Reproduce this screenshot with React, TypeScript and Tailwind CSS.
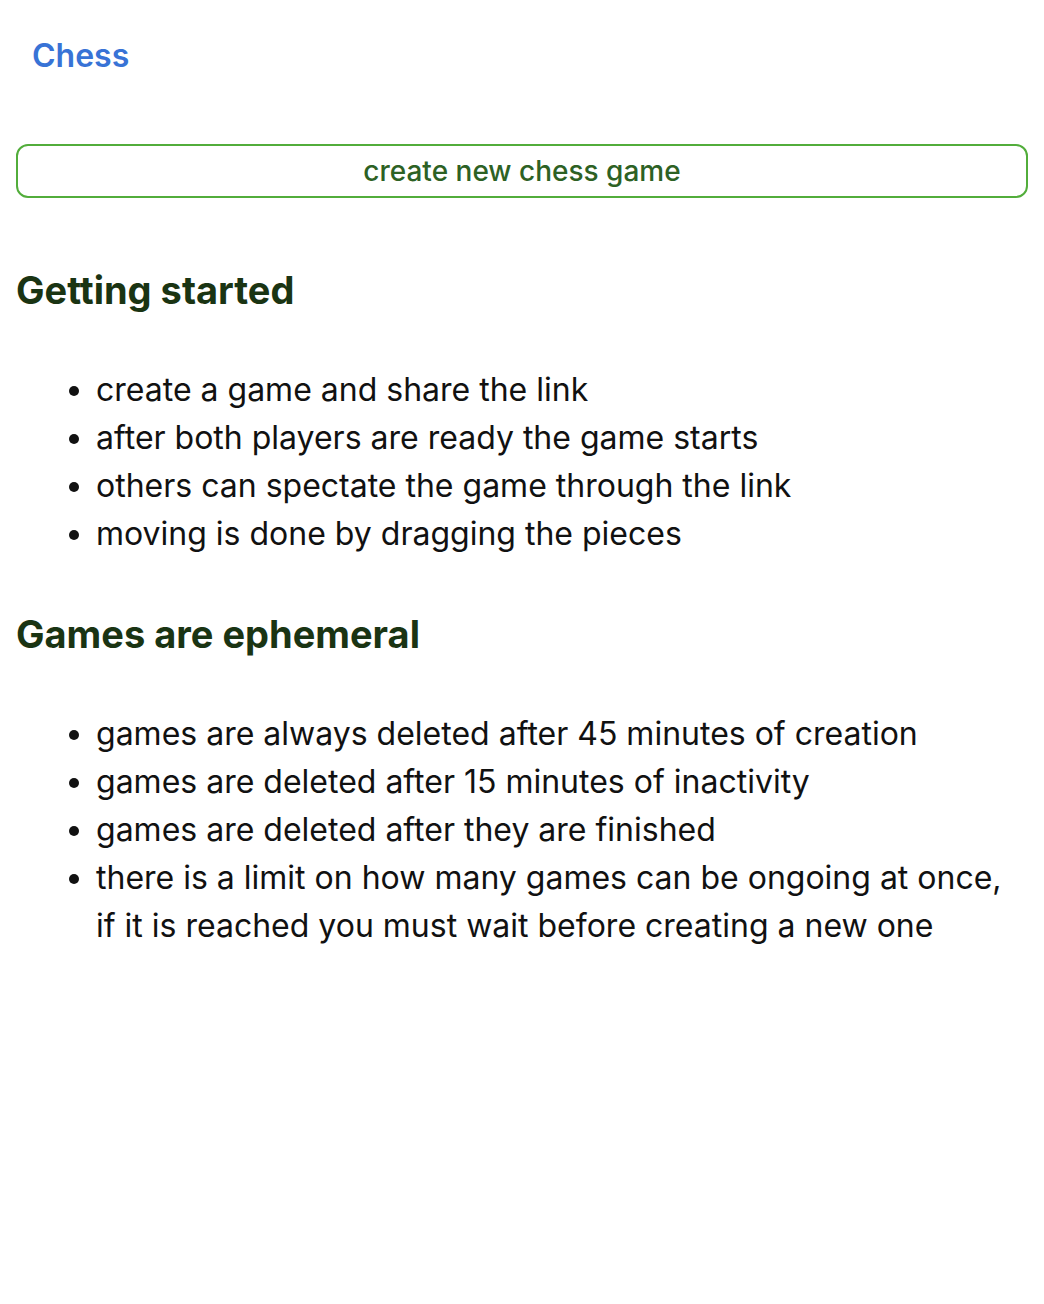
export default function App() {
  const started = [
    "create a game and share the link",
    "after both players are ready the game starts",
    "others can spectate the game through the link",
    "moving is done by dragging the pieces",
  ];
  const ephemeral = [
    "games are always deleted after 45 minutes of creation",
    "games are deleted after 15 minutes of inactivity",
    "games are deleted after they are finished",
    "there is a limit on how many games can be ongoing at once, if it is reached you must wait before creating a new one",
  ];
  return (
    <div className="min-h-screen bg-white px-4 font-['Inter',sans-serif] text-[#111]">
      <nav className="px-4 pt-[34px]">
        <a href="#" className="text-[32px] font-semibold leading-[44px] text-[#3873d6]">
          Chess
        </a>
      </nav>
      <button className="mt-[66px] h-[54px] w-full rounded-[12px] border-2 border-[#52ad3b] text-[28px] font-medium text-[#2d6124]">
        create new chess game
      </button>
      <h2 className="mt-[70px] text-[38px] font-bold leading-[44px] text-[#1a3413]">Getting started</h2>
      <ul className="mt-[54px] list-disc pl-[80px] text-[32px] leading-[48px]">
        {started.map((s) => (
          <li key={s}>{s}</li>
        ))}
      </ul>
      <h2 className="mt-[54px] text-[38px] font-bold leading-[44px] text-[#1a3413]">Games are ephemeral</h2>
      <ul className="mt-[54px] list-disc pl-[80px] text-[32px] leading-[48px]">
        {ephemeral.map((s) => (
          <li key={s}>{s}</li>
        ))}
      </ul>
    </div>
  );
}
